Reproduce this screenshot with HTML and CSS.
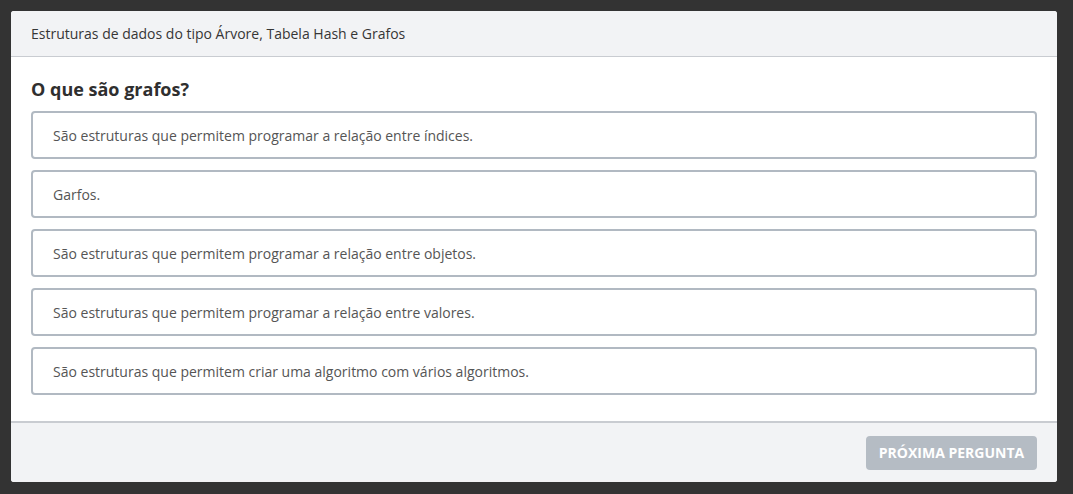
FILE: index.html
```html
<!DOCTYPE html>
<html lang="pt">
<head>
<meta charset="utf-8">
<link rel="stylesheet" href="styles.css">
</head>
<body>
<div class="modal">
  <div class="modal-header">Estruturas de dados do tipo Árvore, Tabela Hash e Grafos</div>
  <div class="modal-body">
    <h2 class="question">O que são grafos?</h2>
    <div class="options">
      <div class="option">São estruturas que permitem programar a relação entre índices.</div>
      <div class="option">Garfos.</div>
      <div class="option">São estruturas que permitem programar a relação entre objetos.</div>
      <div class="option">São estruturas que permitem programar a relação entre valores.</div>
      <div class="option">São estruturas que permitem criar uma algoritmo com vários algoritmos.</div>
    </div>
  </div>
  <div class="modal-footer">
    <button class="next-btn">Próxima pergunta</button>
  </div>
</div>
</body>
</html>
```
FILE: styles.css
```css
html, body {
  margin: 0;
  padding: 0;
  background: #333333;
  font-family: "Open Sans", "Noto Sans", sans-serif;
}
body {
  padding: 11px 16px 12px 11px;
  height: 494px;
  box-sizing: border-box;
}
.modal {
  background: #ffffff;
  border-radius: 3px;
  overflow: hidden;
  width: 1046px;
  display: flex;
  flex-direction: column;
}
.modal-header {
  height: 45px;
  background: #f2f3f5;
  border-bottom: 1px solid #c9ccd1;
  display: flex;
  align-items: center;
  padding: 0 20px;
  font-size: 14px;
  color: #363636;
}
.modal-body {
  padding: 20px 20px 26px;
}
.question {
  margin: 0 0 10px;
  font-size: 18px;
  line-height: 24px;
  font-weight: 700;
  color: #2f2f2f;
}
.options {
  display: flex;
  flex-direction: column;
  gap: 11px;
}
.option {
  height: 48px;
  box-sizing: border-box;
  border: 2px solid #b1b9c2;
  border-radius: 4px;
  display: flex;
  align-items: center;
  padding: 0 20px;
  font-size: 14px;
  color: #555555;
}
.modal-footer {
  background: #f2f3f5;
  border-top: 2px solid #c9ccd1;
  height: 59px;
  display: flex;
  align-items: center;
  justify-content: flex-end;
  padding: 0 20px;
}
.next-btn {
  height: 34px;
  width: 171px;
  border: none;
  border-radius: 4px;
  background: #b5bcc4;
  color: #ffffff;
  font-family: "Open Sans", "Noto Sans", sans-serif;
  font-weight: 700;
  font-size: 14px;
  text-transform: uppercase;
  padding: 0;
}
```
